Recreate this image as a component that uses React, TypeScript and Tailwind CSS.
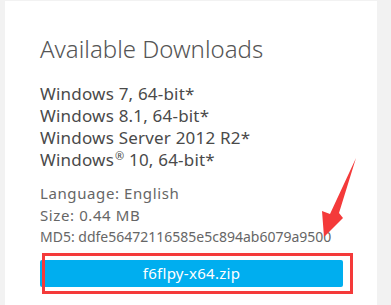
import React from 'react';

const systems = [
  <>Windows 7, 64-bit*</>,
  <>Windows 8.1, 64-bit*</>,
  <>Windows Server 2012 R2*</>,
  <>
    Windows<span className="inline-block align-top text-[11px] leading-[14px] ml-[1px]">®</span> 10, 64-bit*
  </>,
];

function App() {
  return (
    <div
      className="w-[391px] h-[305px] bg-[#f2f2f2] overflow-hidden relative"
      style={{ fontFamily: '"Noto Sans", "Open Sans", sans-serif' }}
    >
      <div className="ml-[5px] mt-[1px] w-[372px] h-[320px] bg-white pl-[35px] pt-[30px]">
        <h2 className="text-[24px] font-light leading-[36px] text-[#555]">Available Downloads</h2>
        <ul className="mt-[16px] text-[17px] leading-[22px] text-[#4a4a4a] tracking-[0.2px]">
          {systems.map((s, i) => (
            <li key={i}>{s}</li>
          ))}
        </ul>
        <div className="mt-[11px] text-[14px] leading-[22px] text-[#666]">
          <div className="text-[15px] tracking-[0.6px]">Language: English</div>
          <div className="text-[15px] tracking-[0.6px]">Size: 0.44 MB</div>
          <div>MD5: ddfe56472116585e5c894ab6079a9500</div>
        </div>
        <button className="mt-[12px] w-[303px] h-[27px] rounded-[2px] bg-[#00aeef] text-white text-[15px] tracking-[0.3px] flex items-center justify-center">
          f6flpy-x64.zip
        </button>
      </div>

      {/* annotation: red box */}
      <div className="absolute left-[42px] top-[253px] w-[311px] h-[41px] border-[3px] border-[#f43a3a]" />

      {/* annotation: arrow */}
      <svg className="absolute left-0 top-0" width="391" height="305" viewBox="0 0 391 305">
        <polygon
          points="356,158 339,213 343,218 324,237 322,211 330,214"
          fill="#f43a3a"
        />
      </svg>
    </div>
  );
}

export default App;
